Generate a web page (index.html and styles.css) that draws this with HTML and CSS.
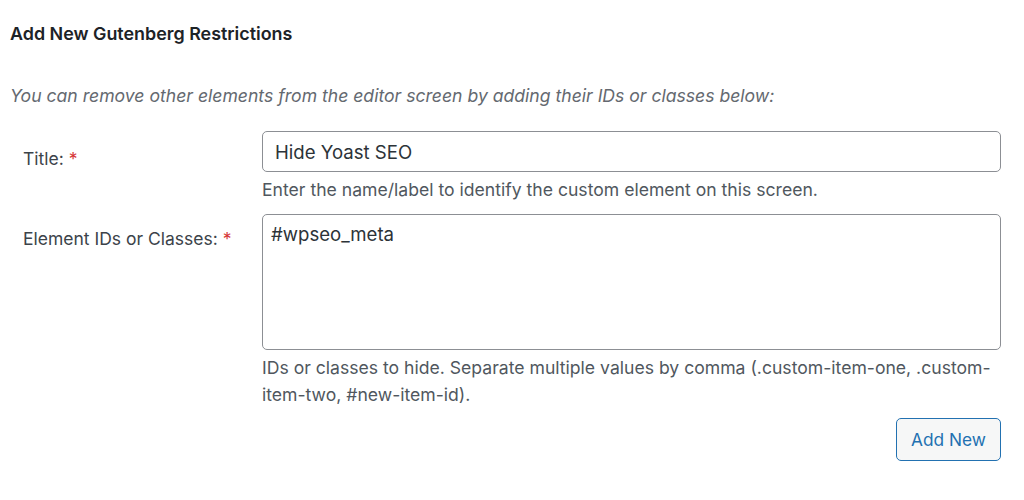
FILE: index.html
```html
<!DOCTYPE html>
<html>
<head>
<meta charset="utf-8">
<link rel="stylesheet" href="styles.css">
</head>
<body>
<div class="wrap">
  <h2 class="heading">Add New Gutenberg Restrictions</h2>
  <p class="intro">You can remove other elements from the editor screen by adding their IDs or classes below:</p>
  <div class="form">
    <div class="row">
      <label class="label label-title">Title: <span class="req">*</span></label>
      <div class="field">
        <input class="input" type="text" value="Hide Yoast SEO">
        <p class="help">Enter the name/label to identify the custom element on this screen.</p>
      </div>
    </div>
    <div class="row">
      <label class="label label-ta">Element IDs or Classes: <span class="req">*</span></label>
      <div class="field">
        <textarea class="textarea">#wpseo_meta</textarea>
        <p class="help">IDs or classes to hide. Separate multiple values by comma (.custom-item-one, .custom-item-two, #new-item-id).</p>
      </div>
    </div>
    <div class="actions">
      <button class="button">Add New</button>
    </div>
  </div>
</div>
</body>
</html>
```
FILE: styles.css
```css
html, body {
  margin: 0;
  padding: 0;
  background: #ffffff;
}
body {
  font-family: Inter, "Liberation Sans", Arial, sans-serif;
  color: #3c434a;
}
.wrap {
  padding: 0 23px 0 10px;
}
.heading {
  margin: 0;
  padding-top: 23px;
  font-size: 17.9px;
  line-height: 22px;
  font-weight: 600;
  color: #1d2327;
}
.intro {
  margin: 40px 0 0 0;
  font-size: 17.6px;
  line-height: 22px;
  font-style: italic;
  color: #646970;
}
.form {
  margin-top: 24px;
}
.row {
  display: flex;
}
.label {
  width: 239px;
  padding-left: 13px;
  font-size: 17.5px;
  line-height: 20px;
  color: #3c434a;
  flex-shrink: 0;
}
.label-title {
  padding-top: 18px;
}
.label-ta {
  padding-top: 15px;
}
.req {
  color: #d63638;
}
.field {
  flex: 1;
}
.input, .textarea {
  display: block;
  box-sizing: border-box;
  width: 100%;
  margin: 0;
  border: 1px solid #8c8f94;
  border-radius: 5px;
  font-family: Inter, "Liberation Sans", Arial, sans-serif;
  font-size: 18.6px;
  color: #2c3338;
  background: #fff;
}
.input {
  height: 41px;
  padding: 0 12px;
}
.textarea {
  height: 136px;
  padding: 7px 8px;
  line-height: 24px;
  resize: none;
}
.help {
  margin: 4px 0 0 0;
  font-size: 17.6px;
  line-height: 27px;
  color: #50575e;
}
.row + .row {
  margin-top: 11px;
}
.actions {
  display: flex;
  justify-content: flex-end;
  margin-top: 10px;
}
.button {
  width: 105px;
  height: 43px;
  border: 1px solid #2271b1;
  border-radius: 5px;
  background: #f6f7f7;
  color: #2271b1;
  font-family: Inter, "Liberation Sans", Arial, sans-serif;
  font-size: 17.3px;
  padding: 0;
}
```
